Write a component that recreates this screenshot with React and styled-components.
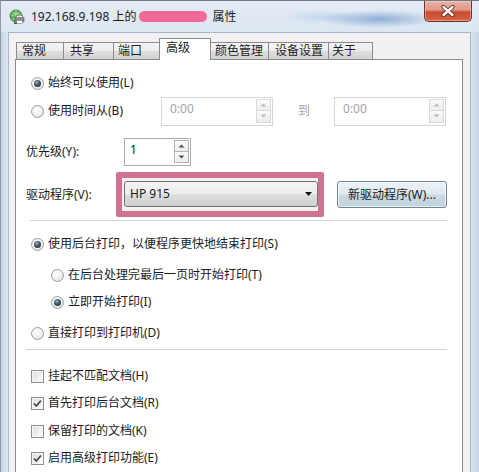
import React from "react";
import styled, { createGlobalStyle, css } from "styled-components";

const Global = createGlobalStyle`
  html, body { margin: 0; padding: 0; overflow: hidden; background: #fff; }
  body { font-family: "Noto Sans", "Noto Sans CJK SC", sans-serif; font-size: 12px; color: #1b1b1b; }
  * { box-sizing: border-box; }
`;

const Window = styled.div`
  width: 479px;
  height: 472px;
  overflow: hidden;
  display: flex;
  flex-direction: column;
  border-top: 1px solid #6f7b89;
  border-left: 1px solid #8d99a7;
  background: linear-gradient(90deg, #c9d6e5 0, #dbe5f0 6px, #dde6f0 calc(100% - 8px), #c4d3e4 100%);
`;

const TitleBar = styled.div`
  height: 31px;
  flex: none;
  display: flex;
  align-items: center;
  padding-left: 8px;
  background:
    radial-gradient(ellipse 58px 9px at 378px 18px, rgba(86, 134, 196, 0.6), rgba(86, 134, 196, 0)),
    radial-gradient(ellipse 40px 7px at 320px 16px, rgba(120, 160, 210, 0.25), rgba(120, 160, 210, 0)),
    linear-gradient(180deg, #e3ebf5 0%, #dce6f2 100%);
`;

const TitleText = styled.span`
  font-size: 12px;
  line-height: 16px;
  color: #1e1e1e;
  white-space: nowrap;
  margin-left: ${(p) => p.$ml || 0}px;
`;

const Redaction = styled.span`
  width: 68px;
  height: 11px;
  margin-left: 3px;
  border-radius: 6px;
  background: #f2699a;
  flex: none;
`;

const CloseButton = styled.div`
  margin-left: auto;
  margin-right: 7px;
  align-self: flex-start;
  width: 48px;
  height: 21px;
  border: 1px solid #6b3328;
  border-top: none;
  border-radius: 0 0 5px 5px;
  display: flex;
  align-items: center;
  justify-content: center;
  background: linear-gradient(180deg, #e9b2a5 0%, #df9786 45%, #c84b32 55%, #d4643f 100%);
  box-shadow: inset 0 0 0 1px rgba(255, 220, 210, 0.45);
`;

const Body = styled.div`
  flex: 1;
  margin: 0 8px 0 7px;
  border: 1px solid #a9b6c5;
  border-bottom: none;
  background: #f1f1f1;
  padding: 5px 7px 0 6px;
  display: flex;
  flex-direction: column;
  min-height: 0;
`;

const TabRow = styled.div`
  display: flex;
  align-items: flex-end;
  height: 21px;
  padding-left: 1px;
  flex: none;
`;

const Tab = styled.div`
  width: ${(p) => p.$w}px;
  height: 17px;
  margin-left: -1px;
  padding-left: ${(p) => p.$pl}px;
  border: 1px solid #898c95;
  border-bottom: none;
  display: flex;
  align-items: center;
  font-size: 12px;
  line-height: 16px;
  color: #1e1e1e;
  white-space: nowrap;
  background: linear-gradient(180deg, #f4f4f4 0%, #ececec 50%, #dedede 52%, #d2d2d2 100%);
  &:first-child { margin-left: 0; }
  ${(p) =>
    p.$active &&
    css`
      height: 22px;
      margin-bottom: -1px;
      background: #fff;
      align-items: flex-start;
      padding-top: 1px;
      position: relative;
      z-index: 1;
    `}
`;

const Panel = styled.div`
  flex: none;
  height: 440px;
  border: 1px solid #898c95;
  background: #fff;
  padding: 13px 0 0 10px;
  display: flex;
  flex-direction: column;
`;

const Row = styled.div`
  display: flex;
  align-items: center;
  height: ${(p) => p.$h || 20}px;
  margin-top: ${(p) => p.$mt || 0}px;
  flex: none;
`;

const Option = styled.label`
  display: flex;
  align-items: center;
  gap: 4px;
  padding-left: ${(p) => p.$indent || 0}px;
  width: ${(p) => (p.$w ? `${p.$w}px` : "auto")};
  flex: none;
  font-size: 12px;
  line-height: 16px;
  color: #1b1b1b;
  white-space: nowrap;
`;

const RadioMark = styled.span`
  width: 13px;
  height: 13px;
  border-radius: 50%;
  border: 1px solid #9c9c9c;
  background: radial-gradient(circle at 40% 35%, #ffffff 0%, #f1f1f1 50%, #d6d6d6 100%);
  display: flex;
  align-items: center;
  justify-content: center;
  flex: none;
  &::after {
    content: "";
    width: 7px;
    height: 7px;
    border-radius: 50%;
    display: ${(p) => (p.$checked ? "block" : "none")};
    background: radial-gradient(circle at 40% 35%, #9db3bf 0%, #3b5261 45%, #1d2d37 100%);
  }
`;

const CheckMark = styled.span`
  width: 13px;
  height: 13px;
  border: 1px solid #8f8f8f;
  background: linear-gradient(135deg, #dadada 0%, #f2f2f2 60%, #ffffff 100%);
  box-shadow: inset 0 0 0 1px #f6f6f6;
  display: flex;
  align-items: center;
  justify-content: center;
  flex: none;
`;

const FieldLabel = styled.span`
  width: ${(p) => p.$w}px;
  flex: none;
  font-size: 12px;
  line-height: 16px;
  color: #1b1b1b;
  white-space: nowrap;
`;

const SpinBox = styled.div`
  width: ${(p) => p.$w}px;
  height: ${(p) => p.$h}px;
  flex: none;
  display: flex;
  border: 1px solid ${(p) => (p.$disabled ? "#d6d6d6" : "#abadb3")};
  background: #fff;
`;

const SpinValue = styled.span`
  flex: 1;
  padding: 0 0 5px ${(p) => p.$pl}px;
  display: flex;
  align-items: center;
  font-size: 12px;
  line-height: 16px;
  color: ${(p) => (p.$disabled ? "#a3a3a3" : "#1b1b1b")};
`;

const SpinColumn = styled.div`
  width: 16px;
  display: flex;
  flex-direction: column;
  padding: 1px 1px 2px 0;
`;

const SpinButton = styled.span`
  flex: 1;
  border: 1px solid ${(p) => (p.$disabled ? "#dadada" : "#b4b4b4")};
  background: linear-gradient(180deg, #fbfbfb 0%, #ececec 100%);
  display: flex;
  align-items: center;
  justify-content: center;
  & + & { margin-top: -1px; }
`;

const ToText = styled.span`
  margin: 0 24px 0 25px;
  color: #a3a3a3;
  font-size: 12px;
  line-height: 16px;
`;

const Highlight = styled.div`
  width: 208px;
  height: 45px;
  flex: none;
  border: 6px solid #d0738f;
  border-radius: 2px;
  background: #f6f2f3;
  padding: 3px 0 4px 2px;
  display: flex;
`;

const Combo = styled.div`
  flex: 1;
  border: 1px solid #707070;
  border-radius: 3px;
  display: flex;
  align-items: center;
  padding: 0 5px 1px 5px;
  background: linear-gradient(180deg, #f4f4f4 0%, #ececec 50%, #dedede 52%, #d0d0d0 100%);
  font-size: 12px;
  line-height: 16px;
  color: #1b1b1b;
`;

const ComboText = styled.span`
  flex: 1;
`;

const PushButton = styled.div`
  width: 110px;
  height: 27px;
  margin-left: 13px;
  flex: none;
  border: 1px solid #6e8798;
  border-radius: 3px;
  display: flex;
  align-items: center;
  justify-content: center;
  font-size: 12px;
  line-height: 16px;
  color: #1b1b1b;
  background: linear-gradient(180deg, #eef3f6 0%, #dfe8ee 48%, #cbd9e2 52%, #c2d3dd 100%);
  box-shadow: inset 0 0 0 1px rgba(255, 255, 255, 0.6);
`;

const Separator = styled.div`
  height: 1px;
  flex: none;
  width: ${(p) => p.$w}px;
  margin-top: ${(p) => p.$mt}px;
  margin-left: ${(p) => p.$ml}px;
  background: #d3d3d3;
`;

const PrinterIcon = () => (
  <svg width="16" height="16" viewBox="0 0 16 16">
    <circle cx="7" cy="7" r="6" fill="#5fae5a" stroke="#2f6e33" strokeWidth="0.8" />
    <path d="M2 6h10M7 1v12M3.5 3.5c2 1.5 5 1.5 7 0M3.5 10.5c2-1.5 5-1.5 7 0" stroke="#c9efc0" strokeWidth="0.7" fill="none" />
    <rect x="6" y="8" width="9" height="5" rx="1" fill="#8d8d8d" stroke="#4a4a4a" strokeWidth="0.6" />
    <rect x="7.5" y="6.5" width="6" height="2" fill="#f4f4f4" stroke="#6a6a6a" strokeWidth="0.5" />
    <rect x="7.5" y="11.5" width="6" height="3" fill="#ffffff" stroke="#6a6a6a" strokeWidth="0.5" />
    <rect x="5" y="13.5" width="3" height="1.5" fill="#2f6e33" />
  </svg>
);

const CloseGlyph = () => (
  <svg width="16" height="12" viewBox="0 0 16 12">
    <path d="M3.5 2L12.5 10M12.5 2L3.5 10" stroke="#5a2a22" strokeWidth="4.2" strokeLinecap="round" />
    <path d="M3.5 2L12.5 10M12.5 2L3.5 10" stroke="#ffffff" strokeWidth="2.4" strokeLinecap="round" />
  </svg>
);

const Arrow = ({ up, disabled }) => (
  <svg width="7" height="4" viewBox="0 0 7 4">
    <path d={up ? "M0.5 3.5L3.5 0.5L6.5 3.5Z" : "M0.5 0.5L3.5 3.5L6.5 0.5Z"} fill={disabled ? "#b9b9b9" : "#505050"} />
  </svg>
);

const Check = () => (
  <svg width="11" height="11" viewBox="0 0 11 11">
    <path d="M2 5.5L4.3 8L9 2.5" stroke="#3a4a60" strokeWidth="1.8" fill="none" strokeLinejoin="round" />
  </svg>
);

const Radio = ({ checked, indent, w, children }) => (
  <Option $indent={indent} $w={w}>
    <RadioMark $checked={checked} />
    {children}
  </Option>
);

const CheckItem = ({ checked, children }) => (
  <Option $indent={5}>
    <CheckMark>{checked && <Check />}</CheckMark>
    {children}
  </Option>
);

const Spin = ({ w, h, value, pl, disabled }) => (
  <SpinBox $w={w} $h={h} $disabled={disabled}>
    <SpinValue $pl={pl} $disabled={disabled}>{value}</SpinValue>
    <SpinColumn>
      <SpinButton $disabled={disabled}><Arrow up disabled={disabled} /></SpinButton>
      <SpinButton $disabled={disabled}><Arrow disabled={disabled} /></SpinButton>
    </SpinColumn>
  </SpinBox>
);

const tabs = [
  { label: "常规", w: 48, pl: 5 },
  { label: "共享", w: 51, pl: 6 },
  { label: "端口", w: 47, pl: 4 },
  { label: "高级", w: 52, pl: 6, active: true },
  { label: "颜色管理", w: 59, pl: 4 },
  { label: "设备设置", w: 61, pl: 6 },
  { label: "关于", w: 45, pl: 3 },
];

export default function App() {
  return (
    <>
      <Global />
      <Window>
        <TitleBar>
          <PrinterIcon />
          <TitleText $ml={6}>192.168.9.198 上的</TitleText>
          <Redaction />
          <TitleText $ml={5}>属性</TitleText>
          <CloseButton>
            <CloseGlyph />
          </CloseButton>
        </TitleBar>
        <Body>
          <TabRow>
            {tabs.map((t) => (
              <Tab key={t.label} $w={t.w} $pl={t.pl} $active={t.active}>
                {t.label}
              </Tab>
            ))}
          </TabRow>
          <Panel>
            <Row>
              <Radio checked indent={5}>始终可以使用(L)</Radio>
            </Row>
            <Row $mt={2} $h={32}>
              <Radio indent={5} w={135}>使用时间从(B)</Radio>
              <Spin w={112} h={29} value="0:00" pl={8} disabled />
              <ToText>到</ToText>
              <Spin w={112} h={29} value="0:00" pl={8} disabled />
            </Row>
            <Row $mt={11} $h={28}>
              <FieldLabel $w={98}>优先级(Y):</FieldLabel>
              <Spin w={67} h={28} value="1" pl={5} />
            </Row>
            <Row $mt={6} $h={45}>
              <FieldLabel $w={90}>驱动程序(V):</FieldLabel>
              <Highlight>
                <Combo>
                  <ComboText>HP 915</ComboText>
                  <svg width="7" height="4" viewBox="0 0 7 4">
                    <path d="M0 0H7L3.5 4Z" fill="#111" />
                  </svg>
                </Combo>
              </Highlight>
              <PushButton>新驱动程序(W)...</PushButton>
            </Row>
            <Separator $mt={3} $ml={4} $w={417} />
            <Row $mt={13}>
              <Radio checked indent={5}>使用后台打印，以便程序更快地结束打印(S)</Radio>
            </Row>
            <Row $mt={11}>
              <Radio indent={25}>在后台处理完最后一页时开始打印(T)</Radio>
            </Row>
            <Row $mt={7}>
              <Radio checked indent={25}>立即开始打印(I)</Radio>
            </Row>
            <Row $mt={11}>
              <Radio indent={5}>直接打印到打印机(D)</Radio>
            </Row>
            <Separator $mt={6} $ml={0} $w={421} />
            <Row $mt={16}>
              <CheckItem>挂起不匹配文档(H)</CheckItem>
            </Row>
            <Row $mt={7}>
              <CheckItem checked>首先打印后台文档(R)</CheckItem>
            </Row>
            <Row $mt={8}>
              <CheckItem>保留打印的文档(K)</CheckItem>
            </Row>
            <Row $mt={7}>
              <CheckItem checked>启用高级打印功能(E)</CheckItem>
            </Row>
          </Panel>
        </Body>
      </Window>
    </>
  );
}
